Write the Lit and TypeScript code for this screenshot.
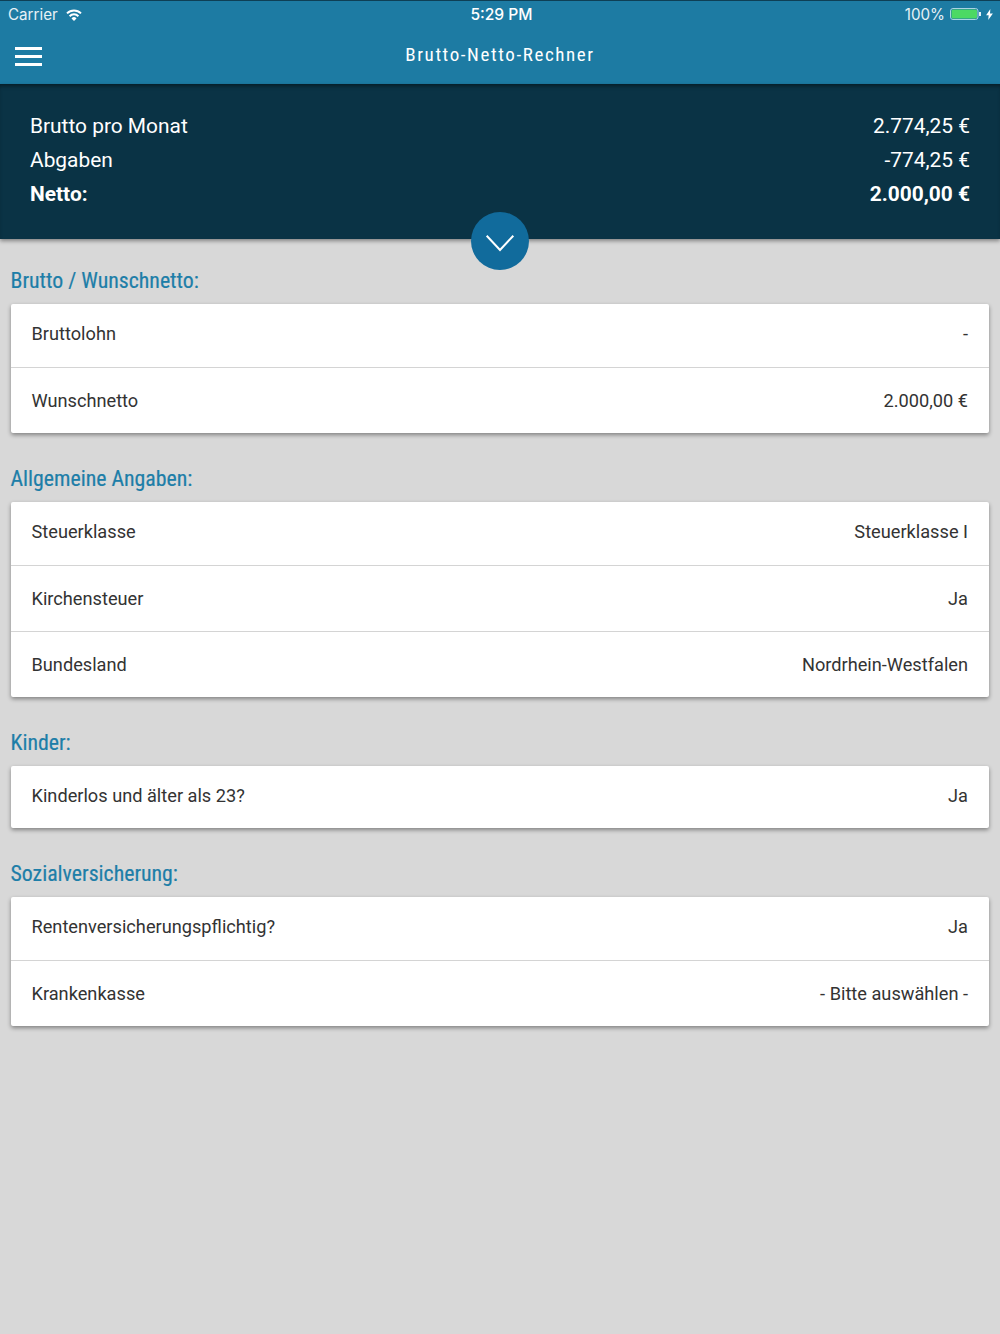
import { LitElement, html, css, svg } from "lit";
import { customElement } from "lit/decorators.js";

const sections: { title: string; rows: [string, string][] }[] = [
  { title: "Brutto / Wunschnetto:", rows: [["Bruttolohn", "-"], ["Wunschnetto", "2.000,00 €"]] },
  { title: "Allgemeine Angaben:", rows: [["Steuerklasse", "Steuerklasse I"], ["Kirchensteuer", "Ja"], ["Bundesland", "Nordrhein-Westfalen"]] },
  { title: "Kinder:", rows: [["Kinderlos und älter als 23?", "Ja"]] },
  { title: "Sozialversicherung:", rows: [["Rentenversicherungspflichtig?", "Ja"], ["Krankenkasse", "- Bitte auswählen -"]] },
];

@customElement("app-root")
export class AppRoot extends LitElement {
  static styles = css`
    :host { display: block; width: 1000px; height: 1334px; background: #d8d8d8; font-family: Roboto, sans-serif; color: #333; overflow: hidden; position: relative; }
    .top { background: #1d7ba3; height: 84px; box-sizing: border-box; border-top: 1px solid #0e3f55; color: #fff; display: flex; flex-direction: column; }
    .status { height: 27px; display: grid; grid-template-columns: 1fr auto 1fr; align-items: center; padding: 0 7px 0 8px; font-family: Inter, sans-serif; font-size: 15.2px; color: #e6f1f6; }
    .status > div { display: flex; align-items: center; }
    .status .right { justify-content: flex-end; gap: 5px; }
    .status .batt { margin-top: -1px; }
    .status .time { font-weight: 500; font-size: 15.6px; color: #fff; padding-left: 2px; }
    .status .carrier { gap: 8px; }
    .nav { flex: 1; display: flex; align-items: center; justify-content: center; position: relative; font-family: "Roboto Condensed", Roboto, sans-serif; font-size: 19px; letter-spacing: 1.6px; padding-bottom: 3px; }
    .burger { position: absolute; left: 15px; top: 19px; width: 27px; display: flex; flex-direction: column; gap: 5px; }
    .burger i { display: block; height: 3px; background: #fff; }
    .summary { background: #0a3345; height: 155px; box-sizing: border-box; padding: 25px 30px 0; color: #fff; font-size: 20.9px; box-shadow: inset 0 4px 4px -2px rgba(0,0,0,.45), 0 2px 4px rgba(0,0,0,.4); position: relative; }
    .sumrow { display: flex; justify-content: space-between; height: 34px; align-items: center; }
    .sumrow.b { font-weight: 700; }
    .fab { position: absolute; left: 471px; top: 128px; width: 58px; height: 58px; padding-top: 5px; box-sizing: border-box; border-radius: 50%; background: #116b9c; display: flex; align-items: center; justify-content: center; }
    .content { padding: 0 11px; }
    h2 { margin: 0 0 0 -0.5px; font-family: "Roboto Condensed", Roboto, sans-serif; font-weight: 400; font-size: 21.8px; -webkit-text-stroke: 0.2px #1d7ea8; color: #1d7ea8; line-height: 28px; padding: 32px 0 9px; }
    .first { padding-top: 28px; }
    .card { background: #fff; box-shadow: 0 2px 4px rgba(0,0,0,.4); border-radius: 2px; }
    .row { height: 63px; box-sizing: border-box; display: flex; justify-content: space-between; align-items: center; padding: 0 21px 5px 20.5px; font-size: 18.2px; }
    .row + .row { border-top: 1px solid #d4d4d4; height: 66px; padding-bottom: 0; }
    .row:only-child { height: 62px; padding-bottom: 3px; }
  `;
  render() {
    return html`
      <div class="top">
        <div class="status">
          <div class="carrier"><span>Carrier</span>
            <svg width="16" height="12" viewBox="0 0 16 12" fill="none" stroke="#fff" stroke-width="2"><path d="M1 4.4a10 10 0 0 1 14 0M3.6 7.2a6.2 6.2 0 0 1 8.8 0"/><path d="M8 12 5.5 9.4a3.5 3.5 0 0 1 5 0z" fill="#fff" stroke="none"/></svg>
          </div>
          <div class="time">5:29 PM</div>
          <div class="right"><span>100%</span>
            <svg class="batt" width="31" height="12" viewBox="0 0 31 12">
              <rect x=".5" y=".5" width="27.5" height="11" rx="2.5" fill="none" stroke="#a9d3e2"/>
              <rect x="1.5" y="1.5" width="25.5" height="9" rx="1.5" fill="#4cd964"/>
              <rect x="29" y="4" width="2" height="4" fill="#e6f1f6"/>
            </svg>
            <svg width="7" height="11" viewBox="0 0 8 13"><path d="M5 0 0 7.5h3L2.5 13 8 5.2H4.6z" fill="#fff"/></svg>
          </div>
        </div>
        <div class="nav">
          <div class="burger"><i></i><i></i><i></i></div>
          Brutto-Netto-Rechner
        </div>
      </div>
      <div class="summary">
        <div class="sumrow"><span>Brutto pro Monat</span><span>2.774,25 €</span></div>
        <div class="sumrow"><span>Abgaben</span><span>-774,25 €</span></div>
        <div class="sumrow b"><span>Netto:</span><span>2.000,00 €</span></div>
        <div class="fab">
          <svg width="30" height="19" viewBox="0 0 30 19" fill="none" stroke="#fff" stroke-width="2">${svg`<path d="M1.7 1.7 15 16 28.3 1.7"/>`}</svg>
        </div>
      </div>
      <div class="content">
        ${sections.map((s, i) => html`
          <h2 class=${i === 0 ? "first" : ""}>${s.title}</h2>
          <div class="card">
            ${s.rows.map((r) => html`<div class="row"><span>${r[0]}</span><span>${r[1]}</span></div>`)}
          </div>`)}
      </div>
    `;
  }
}
